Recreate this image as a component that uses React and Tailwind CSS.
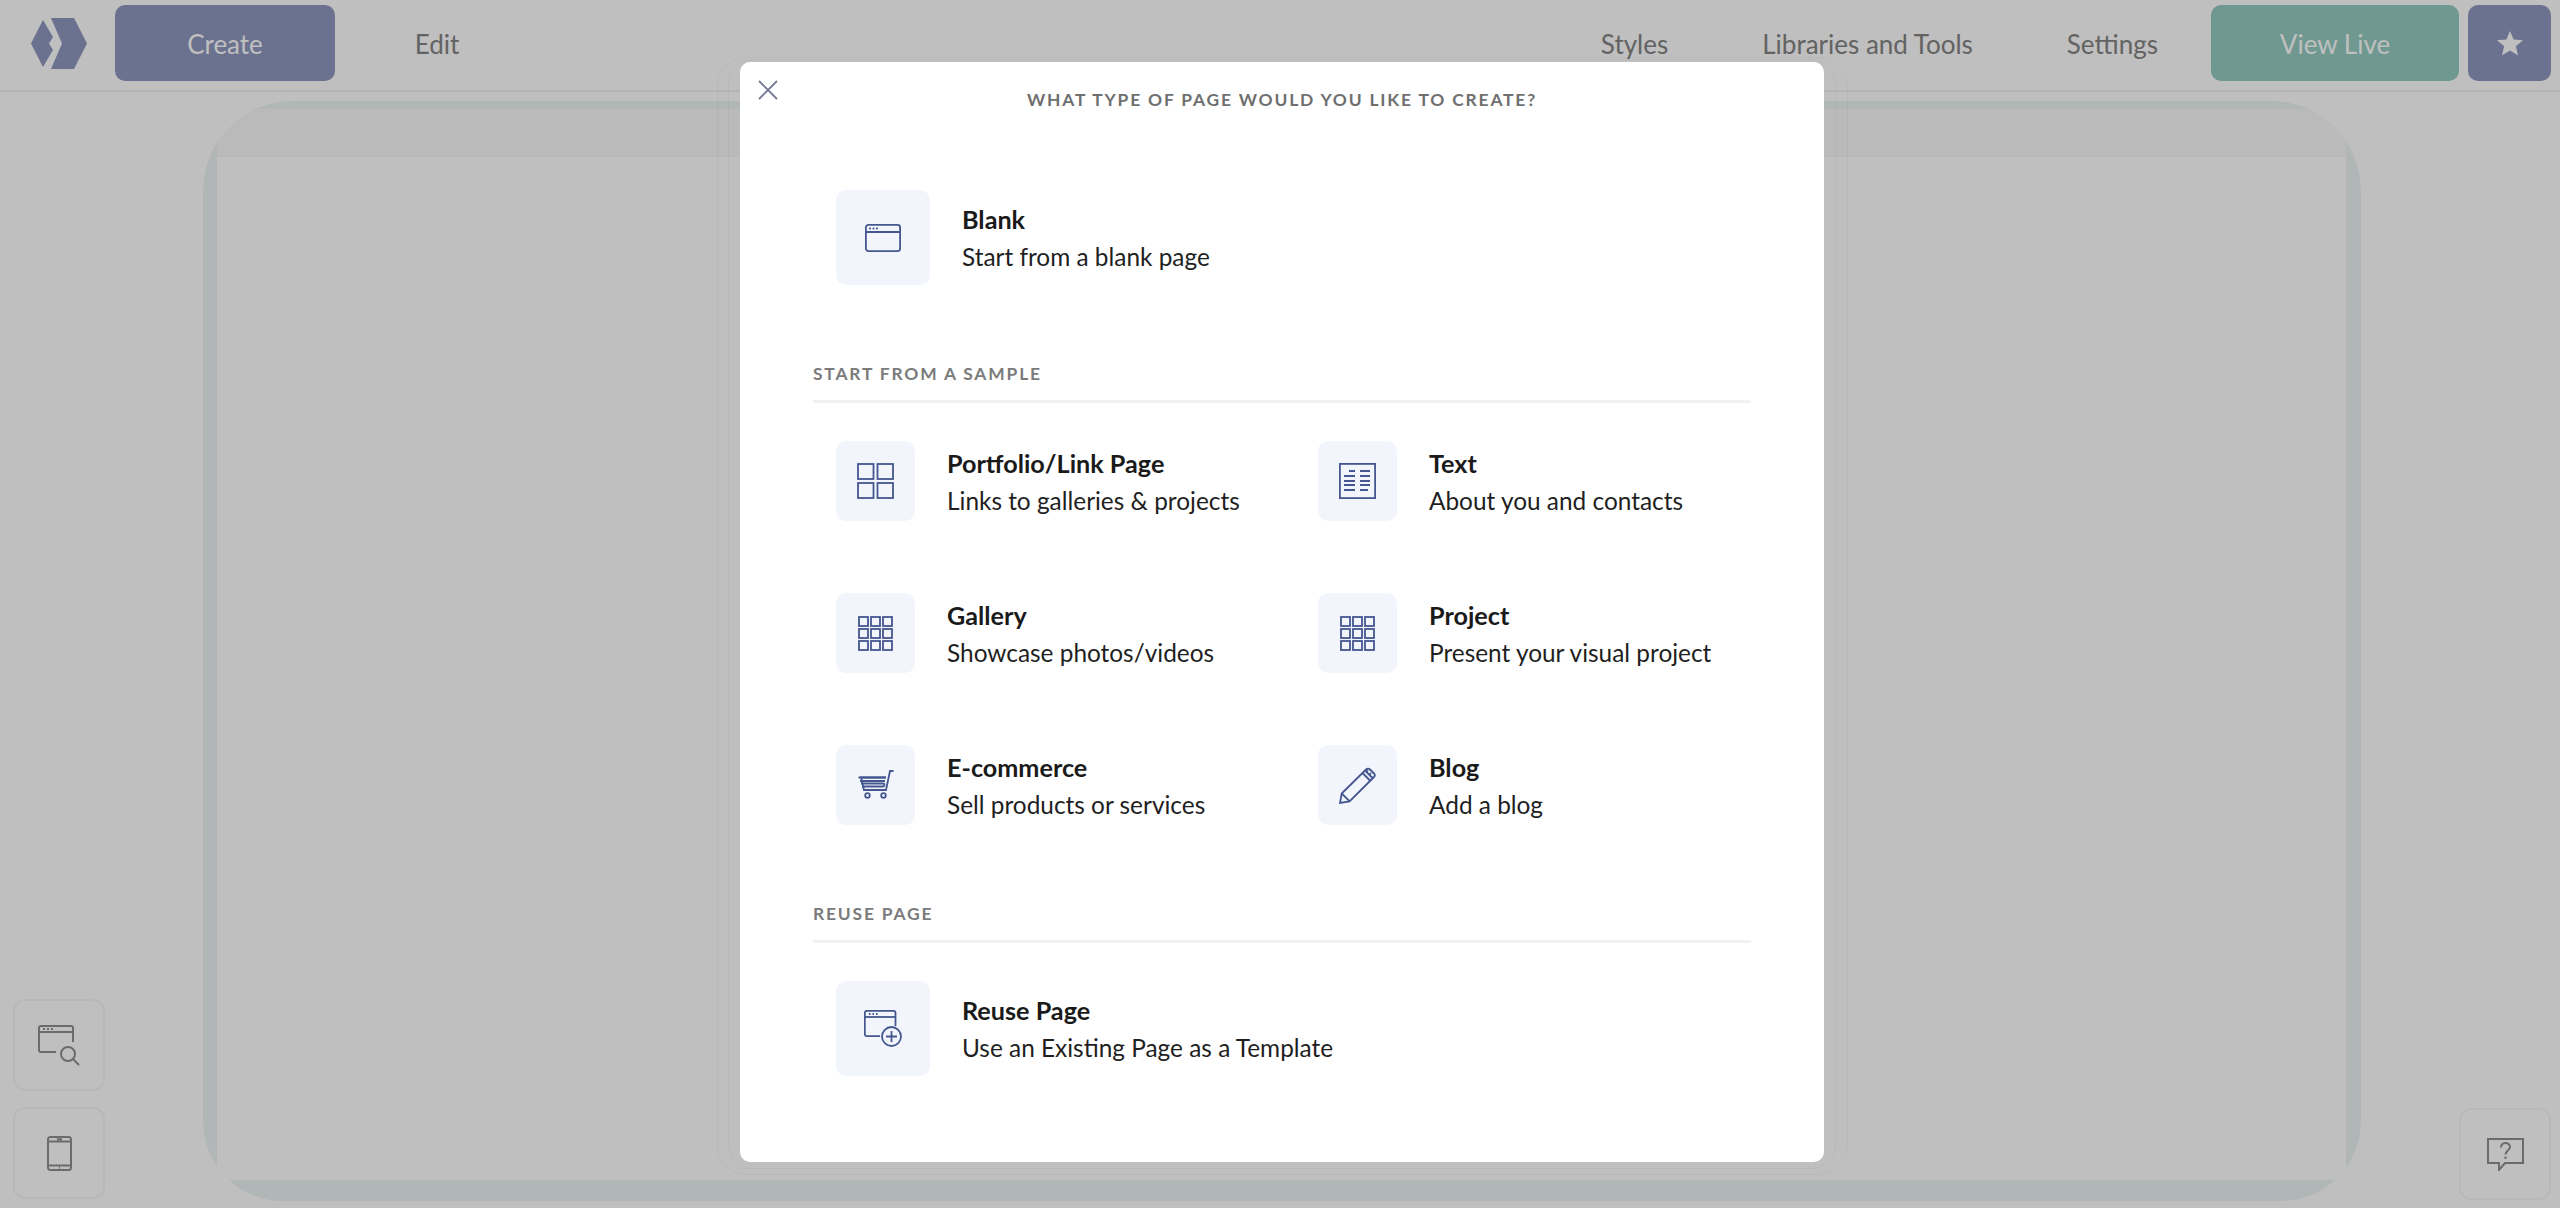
import React from "react";

const FONT = "font-['Lato','Noto_Sans',sans-serif]";
const S = { fill: "none", stroke: "#45578f", strokeWidth: 1.8 };

const WindowIcon = () => (
  <svg width="36" height="28" viewBox="0 0 36 28" {...S}>
    <rect x="0.9" y="0.9" width="34.2" height="26.2" rx="2.5" />
    <path d="M1 8h34" />
    <g fill="#45578f" stroke="none">
      <circle cx="5" cy="4.5" r="1.1" />
      <circle cx="8.500" cy="4.5" r="1.1" />
      <circle cx="12" cy="4.5" r="1.1" />
    </g>
  </svg>
);

const FourIcon = () => (
  <svg width="37" height="36" viewBox="0 0 37 36" {...S}>
    <rect x="1" y="1" width="15.5" height="15" />
    <rect x="20.5" y="1" width="15.5" height="15" />
    <rect x="1" y="20" width="15.5" height="15" />
    <rect x="20.5" y="20" width="15.5" height="15" />
  </svg>
);

const NineIcon = () => (
  <svg width="35" height="35" viewBox="0 0 35 35" {...S}>
    {[1, 13, 25].map((y) =>
      [1, 13, 25].map((x) => <rect key={`${x}-${y}`} x={x} y={y} width="9" height="9" />)
    )}
  </svg>
);

const TextIcon = () => (
  <svg width="37" height="36" viewBox="0 0 37 36" {...S}>
    <rect x="0.9" y="0.9" width="35.2" height="34.2" />
    <path d="M10 8h6M21 8h10M5 13h11M21 13h10M5 18h11M21 18h10M5 22h11M21 22h10M5 27h11M21 27h8" />
  </svg>
);

const CartIcon = () => (
  <svg width="36" height="30" viewBox="0 0 36 30" {...S}>
    <path d="M35.500 1h-3.500l-4 19H6L3 7.500h25" />
    <path d="M0.500 7.500H28M2 11h25M3 13.500h22a1.500 1.500 0 0 1 0 3H4" />
    <circle cx="9.500" cy="25.500" r="2.300" />
    <circle cx="25.500" cy="25.500" r="2.300" />
  </svg>
);

const PencilIcon = () => (
  <svg width="37" height="37" viewBox="0 0 37 37" {...S}>
    <path d="M27 2.500 2.700 26.500 1 36l9.500-1.700L35 10a2.500 2.500 0 0 0 0-3.500L31 2.500a2.800 2.800 0 0 0-4 0Z" />
    <path d="M2.700 26.500l8 7.800M23.500 6l8 8M26 3.500l8 8M29 3l-1 1M32 6l-1 1" />
  </svg>
);

const ReuseIcon = () => (
  <svg width="38" height="37" viewBox="0 0 38 37" {...S}>
    <path d="M31.500 16V3a2.200 2.200 0 0 0-2.200-2.200H3A2.200 2.200 0 0 0 .8 3v21A2.200 2.200 0 0 0 3 26.200h13" />
    <path d="M1 7h30.500" />
    <path d="M5 4h1.500M8.500 4H10M12 4h1.500" />
    <circle cx="27.500" cy="26.500" r="9.500" />
    <path d="M27.500 21v11M22 26.500h11" />
  </svg>
);

const Item = ({ big, icon, title, desc }) => (
  <div className="flex items-center gap-[32px]">
    <div
      className={`flex items-center justify-center rounded-[10px] bg-[#f2f5fc] ${
        big ? "w-[94px] h-[95px]" : "w-[79px] h-[80px]"
      }`}
    >
      {icon}
    </div>
    <div className={big ? "" : "pt-[2px]"}>
      <div className="text-[25.2px] leading-[37px] font-bold text-[#1a1a1a]">{title}</div>
      <div className="text-[24.4px] leading-[37px] text-[#1f1f1f]">{desc}</div>
    </div>
  </div>
);

const SectionLabel = ({ children, className }) => (
  <div className={`border-b-[3px] border-[#f2f2f2] pb-[16px] ${className}`}>
    <div className="text-[17.4px] leading-[20px] font-bold tracking-[0.105em] uppercase text-[#7b7b7b]">
      {children}
    </div>
  </div>
);

const NavButton = ({ children }) => (
  <button className="h-[76px] px-[47px] pt-[2px] text-[26px] text-[#848484]">{children}</button>
);

const FloatBox = ({ children }) => (
  <div className="flex h-[92px] w-[92px] items-center justify-center rounded-[12px] border-2 border-[#f4f6f6] bg-white">
    {children}
  </div>
);

export default function App() {
  return (
    <div className={`relative h-[1208px] w-full overflow-hidden bg-white ${FONT}`}>
      <header className="flex h-[92px] items-start border-b-2 border-[#f2f2f2] pt-[5px]">
        <svg className="ml-[31px] mt-[13px] mr-[28px]" width="56" height="51" viewBox="0 0 56 51" fill="#8f98c0">
          <path d="M20 0h23l13 25.500L43 51H20l11-25.500z" />
          <path d="M12 2l10 17-4 6.500 4 6.500-10 17L0 25.500z" />
        </svg>
        <button className="h-[76px] w-[220px] rounded-[10px] bg-[#8f98c0] pt-[2px] text-[26px] text-white">Create</button>
        <button className="h-[76px] w-[204px] pt-[2px] text-[26px] text-[#848484]">Edit</button>
        <div className="ml-auto flex items-start pr-[9px]">
          <NavButton>Styles</NavButton>
          <NavButton>Libraries and Tools</NavButton>
          <NavButton>Settings</NavButton>
          <button className="ml-[6px] h-[76px] w-[248px] rounded-[10px] bg-[#93cbc0] pt-[2px] text-[26px] text-white">View Live</button>
          <button className="ml-[9px] flex h-[76px] w-[83px] items-center justify-center rounded-[10px] bg-[#8f98c0]">
            <svg width="26" height="25" viewBox="0 0 26 25" fill="white">
              <path d="M13 0l3.600 8.600 9.400.7-7.200 6 2.300 9.200L13 19.500 4.900 24.500l2.300-9.200L0 9.300l9.400-.7z" />
            </svg>
          </button>
        </div>
      </header>

      <main className="pt-[9px] pl-[203px] pr-[199px]">
        <div className="h-[1100px] overflow-hidden rounded-t-[90px] rounded-b-[80px] bg-[#ecf3f3] pt-[8px] pb-[21px] pl-[14px] pr-[15px]">
          <div className="flex h-full flex-col overflow-hidden rounded-b-[12px] bg-white">
            <div className="h-[48px] border-b border-[#f4f4f4] bg-[#f9f9f9]" />
            <div className="flex-1 bg-white" />
          </div>
        </div>
      </main>

      <div className="absolute left-[13px] top-[999px] flex flex-col gap-[16px]">
        <FloatBox>
          <svg width="42" height="42" viewBox="0 0 42 42" fill="none" stroke="#8f8f8f" strokeWidth="2">
            <path d="M35 18V4a2 2 0 0 0-2-2H3a2 2 0 0 0-2 2v22a2 2 0 0 0 2 2h15" />
            <path d="M1 8h34M5 5h2M9 5h2M13 5h2" />
            <circle cx="30" cy="30" r="7" />
            <path d="M35 35l6 6" />
          </svg>
        </FloatBox>
        <FloatBox>
          <svg width="25" height="35" viewBox="0 0 25 35" fill="none" stroke="#8f8f8f" strokeWidth="2">
            <rect x="1" y="1" width="23" height="33" rx="2.500" />
            <path d="M1 5.500h23M1 29.500h23M10 3.200h5M12 31.700h1" />
          </svg>
        </FloatBox>
      </div>
      <div className="absolute left-[2459px] top-[1108px]">
        <FloatBox>
          <svg width="37" height="33" viewBox="0 0 37 33" fill="none" stroke="#8f8f8f" strokeWidth="2">
            <path d="M1 1h35v24H18l-6 7v-7H1z" />
            <path d="M14 9.500c0-6 9-6 9-.5 0 3.500-4.500 3.500-4.500 7.500M18.500 18.500v2.500" />
          </svg>
        </FloatBox>
      </div>

      <div className="absolute inset-0 bg-black/25">
        <div className="absolute left-[717px] top-[57px] h-[1118px] w-[1131px] rounded-[30px] border border-black/[0.03]" />
        <div className="absolute left-[728px] top-[59px] h-[1110px] w-[1108px] rounded-[24px] border border-black/[0.03]" />
        <div className="absolute left-[740px] top-[62px] h-[1100px] w-[1084px] rounded-[10px] bg-white px-[73px] pt-[26px]">
          <button className="absolute left-[18px] top-[18px]" aria-label="Close">
            <svg width="20" height="20" viewBox="0 0 20 20" fill="none" stroke="#747a94" strokeWidth="1.800">
              <path d="M1 1l18 18M19 1L1 19" />
            </svg>
          </button>
          <h1 className="text-center text-[17.4px] leading-[24px] font-bold tracking-[0.105em] uppercase text-[#6f6f6f]">
            What type of page would you like to create?
          </h1>
          <div className="mt-[78px] ml-[23px]">
            <Item big icon={<WindowIcon />} title="Blank" desc="Start from a blank page" />
          </div>
          <SectionLabel className="mt-[79px]">Start from a sample</SectionLabel>
          <div className="mt-[38px] ml-[23px] grid grid-cols-[482px_1fr] gap-y-[72px]">
            <Item icon={<FourIcon />} title="Portfolio/Link Page" desc="Links to galleries & projects" />
            <Item icon={<TextIcon />} title="Text" desc="About you and contacts" />
            <Item icon={<NineIcon />} title="Gallery" desc="Showcase photos/videos" />
            <Item icon={<NineIcon />} title="Project" desc="Present your visual project" />
            <Item icon={<CartIcon />} title="E-commerce" desc="Sell products or services" />
            <Item icon={<PencilIcon />} title="Blog" desc="Add a blog" />
          </div>
          <SectionLabel className="mt-[79px]">Reuse Page</SectionLabel>
          <div className="mt-[38px] ml-[23px]">
            <Item big icon={<ReuseIcon />} title="Reuse Page" desc="Use an Existing Page as a Template" />
          </div>
        </div>
      </div>
    </div>
  );
}
